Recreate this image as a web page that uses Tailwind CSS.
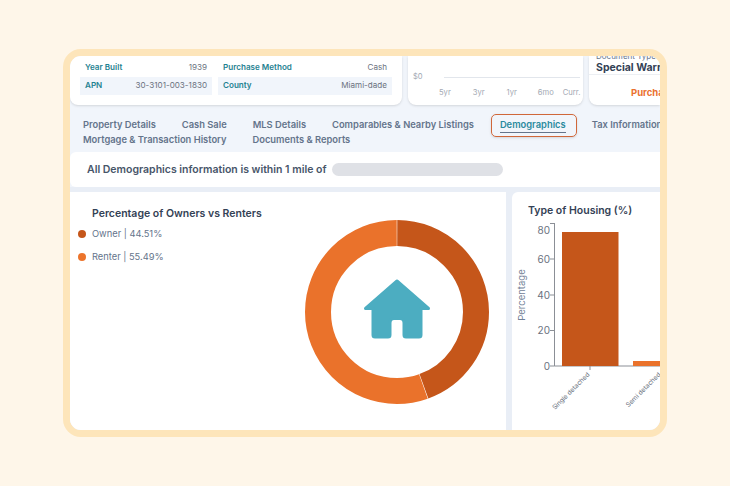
<!DOCTYPE html>
<html lang="en">

<head>
    <meta charset="UTF-8">
    <title>Demographics</title>
    <script src="https://cdn.jsdelivr.net/npm/@tailwindcss/browser@4"></script>
</head>

<body class="bg-[#fef6e9] font-[Inter,sans-serif] w-[730px] h-[486px] overflow-hidden">
    <div class="ml-[63px] mt-[49px] w-[604px] h-[388px] border-[7px] border-[#fde5ba] rounded-[18px] overflow-hidden bg-[#f1f5fb] flex flex-col">

        <!-- top cards -->
        <div class="h-[49px] flex gap-[6px] shrink-0">
            <div class="w-[332px] bg-white rounded-b-lg pl-[10px] flex gap-[6px] text-[8.1px] leading-[17px] shadow-sm">
                <div class="w-[132px] pt-[3px]">
                    <div class="h-[18px] flex justify-between px-[5px]">
                        <span class="font-semibold text-[#1f8291]">Year Built</span>
                        <span class="text-[#6b7280]">1939</span>
                    </div>
                    <div class="h-[18px] flex justify-between px-[5px] bg-[#f1f5fb]">
                        <span class="font-semibold text-[#1f8291]">APN</span>
                        <span class="text-[#6b7280]">30-3101-003-1830</span>
                    </div>
                </div>
                <div class="w-[174px] pt-[3px]">
                    <div class="h-[18px] flex justify-between px-[5px]">
                        <span class="font-semibold text-[#1f8291]">Purchase Method</span>
                        <span class="text-[#6b7280]">Cash</span>
                    </div>
                    <div class="h-[18px] flex justify-between px-[5px] bg-[#f1f5fb]">
                        <span class="font-semibold text-[#1f8291]">County</span>
                        <span class="text-[#6b7280]">Miami-dade</span>
                    </div>
                </div>
            </div>

            <div class="w-[175px] bg-white rounded-b-lg shadow-sm pl-[5px] pr-[3px] pt-[15px] text-[7.6px] text-[#a3a9b3]">
                <div class="flex items-center h-[12px]">
                    <span class="w-[31px]">$0</span>
                    <div class="flex-1 h-px bg-[#e2e6ec]"></div>
                </div>
                <div class="flex gap-[22px] pl-[26px] mt-[5px] leading-[10px]">
                    <span>5yr</span><span>3yr</span><span>1yr</span><span class="-ml-[1px]">6mo</span><span class="-ml-[13px]">Curr.</span>
                </div>
            </div>

            <div class="flex-1 min-w-0 bg-white rounded-bl-lg shadow-sm overflow-hidden whitespace-nowrap">
                <div class="pl-[7px] h-[24px] border-b border-[#eceff3] -mt-[5px]">
                    <div class="text-[8px] leading-[10px] text-[#64748b]">Document Type</div>
                    <div class="text-[10.5px] leading-[14px] font-bold text-[#334155]">Special Warranty</div>
                </div>
                <div class="text-[9.5px] leading-[14px] font-bold text-[#ea7030] pl-[42px] mt-[11px]">Purchase</div>
            </div>
        </div>

        <!-- tabs -->
        <div class="h-[47px] shrink-0 pl-[13px] pt-[13px] text-[9.35px] leading-[14px] font-semibold text-[#64748b] whitespace-nowrap">
            <div class="flex gap-[26px]">
                <span>Property Details</span>
                <span>Cash Sale</span>
                <span>MLS Details</span>
                <span>Comparables &amp; Nearby Listings</span>
                <span class="relative text-[#2a8a9e] border-b border-[#64748b]">
                    Demographics
                    <span class="absolute -left-[9px] -right-[11px] -top-[4px] -bottom-[5px] border border-[#d0673a] rounded-[5px] shadow-sm"></span>
                </span>
                <span>Tax Information</span>
            </div>
            <div class="flex gap-[26px]">
                <span>Mortgage &amp; Transaction History</span>
                <span>Documents &amp; Reports</span>
            </div>
        </div>

        <!-- banner -->
        <div class="h-[35px] shrink-0 bg-white rounded-l-md flex items-center pl-[17px] gap-[6px] text-[10.5px] font-semibold text-[#475569]">
            <span class="pt-[1px]">All Demographics information is within 1 mile of</span>
            <div class="w-[171px] h-[13px] rounded-full bg-[#dfe1e6]"></div>
        </div>

        <!-- charts -->
        <div class="flex-1 min-h-0 flex gap-[6px] bg-[#e9eef6] pt-[5px]">
            <div class="w-[436px] bg-white flex">
                <div class="w-[234px] pl-[8px]">
                    <h2 class="ml-[14px] mt-[15px] text-[10.5px] leading-[14px] font-semibold text-[#334155]">Percentage of Owners vs Renters</h2>
                    <div class="mt-[6px] flex items-center gap-[6px] h-[14px] text-[9.3px] text-[#64748b]">
                        <span class="w-[8px] h-[8px] rounded-full bg-[#c5561a]"></span>
                        <span>Owner | 44.51%</span>
                    </div>
                    <div class="mt-[9px] flex items-center gap-[6px] h-[14px] text-[9.3px] text-[#64748b]">
                        <span class="w-[8px] h-[8px] rounded-full bg-[#ec742b]"></span>
                        <span>Renter | 55.49%</span>
                    </div>
                </div>
                <svg class="mt-[27px] w-[186px] h-[186px]" viewBox="0 0 186 186">
                    <g transform="rotate(-90 93 93)" fill="none" stroke-width="26">
                        <circle cx="93" cy="93" r="79" stroke="#c5561a" pathLength="100" stroke-dasharray="44.41 55.59" stroke-dashoffset="-0.05"></circle>
                        <circle cx="93" cy="93" r="79" stroke="#ea722b" pathLength="100" stroke-dasharray="55.39 44.61" stroke-dashoffset="-44.56"></circle>
                    </g>
                    <path fill="#4cadc1" stroke="#4cadc1" stroke-width="3" stroke-linejoin="round"
                        d="M93 62 L61.5 89.5 H69 V116 Q69 118 71 118 H84 Q86 118 86 116 V104 Q86 99.5 90 99.5 H96 Q100 99.5 100 104 V116 Q100 118 102 118 H115 Q117 118 117 116 V89.5 H124.5 Z"></path>
                </svg>
            </div>

            <div class="flex-1 min-w-0 bg-white rounded-tl-md overflow-hidden">
                <h2 class="ml-[16px] mt-[12px] text-[10.5px] leading-[14px] font-semibold text-[#334155] whitespace-nowrap">Type of Housing (%)</h2>
                <svg class="-mt-[1px] w-[148px] h-[213px]" viewBox="512 217 148 213" font-family="Inter, sans-serif">
                    <text x="525" y="295" transform="rotate(-90 525 295)" text-anchor="middle" font-size="9.5" fill="#718096">Percentage</text>
                    <path d="M554.5 223 V366 H660" fill="none" stroke="#8b8f96" stroke-width="1"></path>
                    <path d="M550 223.5 H554.5 M550 259 H554.5 M550 295 H554.5 M550 330.5 H554.5 M550 366 H554.5 M590 366 V370" stroke="#8b8f96" stroke-width="1"></path>
                    <g font-size="10" fill="#6b7280" text-anchor="end">
                        <text x="550" y="233.5">80</text>
                        <text x="550" y="262.5">60</text>
                        <text x="550" y="298.5">40</text>
                        <text x="550" y="334">20</text>
                        <text x="550" y="369.5">0</text>
                    </g>
                    <rect x="562" y="232" width="56.5" height="134" fill="#c5561a"></rect>
                    <rect x="633" y="361" width="27" height="5" fill="#ea722b"></rect>
                    <g font-size="6.5" fill="#6b7280" text-anchor="end">
                        <text x="590" y="375" transform="rotate(-45 590 375)">Single detached</text>
                        <text x="661" y="375" transform="rotate(-45 661 375)">Semi detached</text>
                    </g>
                </svg>
            </div>
        </div>
    </div>
</body>

</html>
